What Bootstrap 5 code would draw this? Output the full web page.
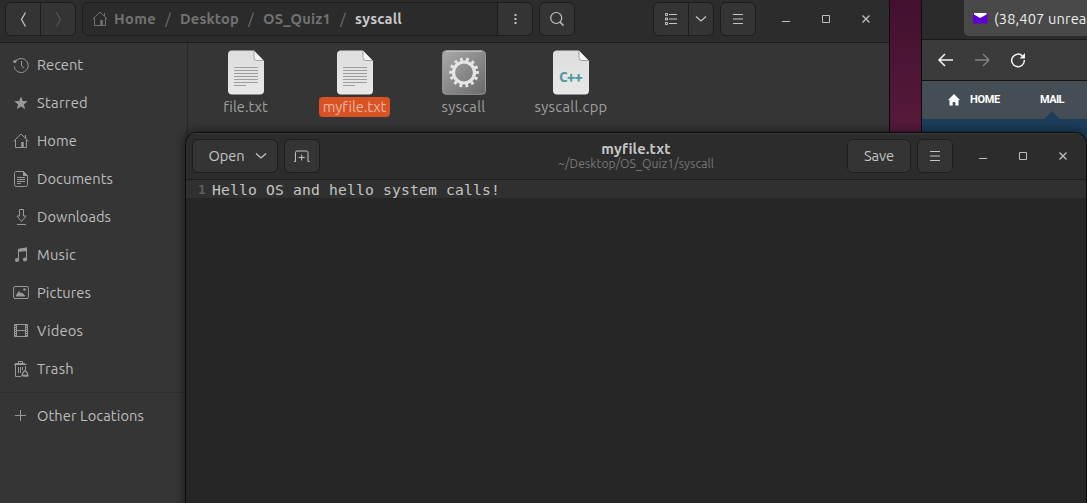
<!DOCTYPE html>
<html lang="en">
<head>
<meta charset="utf-8">
<title>Desktop</title>
<link href="https://cdn.jsdelivr.net/npm/bootstrap@5.3.0/dist/css/bootstrap.min.css" rel="stylesheet">
<style>
body{width:1087px;height:503px;background:linear-gradient(#43102e,#571a3b 130px);font:14.67px/20px Ubuntu,"Noto Sans",sans-serif;color:#bdbdbd}
svg{display:block;flex:none;fill:none;stroke:currentColor}
.win{position:absolute;overflow:hidden;border:1px solid #0c0c0c}
.files{left:-1px;top:-6px;width:891px;height:520px;border-radius:0 10px 0 0;background:#353535}
.browser{left:921px;top:-6px;width:190px;height:520px;border-radius:10px 0 0 0;background:#1c3e5c}
.editor{left:185px;top:132px;width:902px;height:390px;border-radius:12px 12px 0 0;background:#262626;box-shadow:0 0 9px 2px #0006}
.bar{background:#2c2c2c;border-bottom:1px solid #1c1c1c}
.files .bar{height:48px;padding:7px 0 0 5px}
.editor .bar{height:47px;padding:6px 0 0 6px;box-shadow:inset 0 1px #3a3a3a;position:relative}
.tool,.tools{height:34px;border:1px solid #1d1d1d;border-radius:6px;background:#343434;color:#c4c4c4}
.tool{width:36px;display:flex;align-items:center;justify-content:center;padding:0}
.tools{display:flex;overflow:hidden}
.tools>*{display:flex;align-items:center;justify-content:center}
.tools>*+*{border-left:1px solid #1d1d1d}
.path{width:346px;background:#2b2b2b;color:#727272;font-weight:700;justify-content:flex-start!important;padding-left:9px}
.sep{width:24px;text-align:center;font-weight:400}
.ctl{width:40px;height:34px;display:flex;align-items:center;justify-content:center}
.side{width:188px;height:472px;border-right:1px solid #282828;padding-top:3px}
.place{height:38px;padding-left:13px;display:flex;align-items:center;gap:8px}
.place svg{color:#989898}
.rule{height:1px;background:#2e2e2e;margin:4px 0}
.item{width:109px;display:flex;flex-direction:column;align-items:center;color:#a0a0a0}
.item svg{height:45px;margin-bottom:2px}
.label{height:20px;line-height:19px;border-radius:4px;padding:0 4px}
.sel{background:#d95223;color:#eab8a2}
.ttl{position:absolute;left:0;right:0;top:8px;text-align:center;line-height:15px;font-weight:700;color:#c6c6c6}
.ttl small{font-size:12.2px;font-weight:400;color:#777;display:block}
.code{height:18px;background:#303030;font:14.67px/20px "DejaVu Sans Mono",monospace;color:#c4c4c4;padding-left:11px;white-space:pre;display:flex}
.code b{color:#5d5d63;font-size:13px;width:15px;font-weight:700;padding-left:1px}
.tabs{height:45px;background:#2b2b2b;border-bottom:1px solid #1b1b1b;padding-left:42px}
.tabitem{height:41px;width:150px;background:#494949;border-radius:0 0 0 5px;padding:14px 0 0 9px;color:#ededed;white-space:nowrap}
.addr{height:41px;background:#3b3b3b;border-bottom:1px solid #141414;padding-left:13px;color:#f2f2f2}
.mailnav{height:38px;background:#464e55;padding-left:24px;color:#fff;font:bold 11px/37px Roboto,"Liberation Sans",sans-serif;position:relative}
.tri{position:absolute;left:122px;bottom:0;border:8px solid transparent;border-top:0;border-bottom-color:#1c3e5c}
[data-w]{white-space:pre;display:inline-block}
</style>
<script src="https://cdn.jsdelivr.net/npm/bootstrap@5.3.0/dist/js/bootstrap.bundle.min.js"></script>
</head>
<body class="position-relative overflow-hidden m-0">
<svg width="0" height="0" class="position-absolute">
<defs>
<linearGradient id="paper" x2="0" y2="1"><stop stop-color="#dedede"/><stop offset="1" stop-color="#e8e8e8"/></linearGradient>
<linearGradient id="metal" x2="1" y2="1"><stop stop-color="#aaa"/><stop offset="1" stop-color="#696969"/></linearGradient>
<symbol id="home" viewBox="0 0 16 16"><path d="M.6 8.2 8 1l7.4 7.2M2.5 7v7.5h11V7M12.5 2v3.2"/><path d="M8.2 14.5V9h2.6v5.5z" fill="currentColor" stroke="none"/></symbol>
<symbol id="menu" viewBox="0 0 12 12"><path d="M1 1.500h10M1 6h10M1 10.500h10" stroke-width="1"/></symbol>
<symbol id="down" viewBox="0 0 12 8"><path d="m1 1.500 5 4.500 5-4.500" stroke-width="1.300"/></symbol>
<symbol id="page" viewBox="0 0 36 45"><path d="M4 .5h22L36 11v29.500a4 4 0 0 1-4 4H4a4 4 0 0 1-4-4v-36a4 4 0 0 1 4-4z" fill="url(#paper)" stroke="none"/><path d="M26 1v6.500a3 3 0 0 0 3 3h6.500" fill="#f4f4f4" stroke="#999" stroke-width=".9"/></symbol>
<symbol id="lines" viewBox="0 0 36 45"><path d="M6 17.500h24M6 20.500h24M6 23.500h24M6 26.500h24M6 29.500h24M6 32.500h24M6 35.500h12" stroke="#9d9d9d"/></symbol>
<symbol id="min" viewBox="0 0 8 8"><path d="M0 6.500h8" stroke-width="1"/></symbol>
<symbol id="max" viewBox="0 0 8 8"><path d="M.5.500h7v7h-7z"/></symbol>
<symbol id="cls" viewBox="0 0 8 8"><path d="m.5.500 7 7m0-7-7 7" stroke-width="1.400"/></symbol>
</defs></svg>

<main class="win files">
 <header class="bar d-flex">
  <div class="tools" style="width:71px"><span style="width:34px"><svg width="7" height="17"><path d="M5.500 1.500 1.500 8.500l4 7" stroke-width="1.300"/></svg></span><span class="flex-fill" style="color:#606060"><svg width="7" height="17"><path d="m1.500 1.500 4 7-4 7"/></svg></span></div>
  <div class="tools" style="width:451px;margin-left:6px"><div class="path" style="width:414px"><svg width="16" height="16"><use href="#home"/></svg><span data-w="42" style="margin-left:6px">Home</span><span class="sep">/</span><span data-w="59">Desktop</span><span class="sep">/</span><span data-w="68">OS_Quiz1</span><span class="sep">/</span><span data-w="47" style="color:#c8c8c8">syscall</span></div><span class="flex-fill"><svg width="3" height="12"><path d="M1.500 1v2m0 2v2m0 2v2" stroke-width="2"/></svg></span></div>
  <button class="tool" style="margin-left:6px"><svg width="16" height="16"><circle cx="7.200" cy="7" r="5.500" stroke-width="1.200"/><path d="m11 11 3.500 3.500" stroke-width="1.500"/></svg></button>
  <div class="tools" style="width:61px;margin-left:78px"><span style="width:34px"><svg width="12" height="12"><path d="M.5.500h2v2h-2zm0 4.500h2v2h-2zm0 4.500h2v2h-2zM4 1.500h8M4 6h8M4 10.500h8"/></svg></span><span class="flex-fill"><svg width="12" height="8"><use href="#down"/></svg></span></div>
  <button class="tool" style="margin-left:6px"><svg width="12" height="12"><use href="#menu"/></svg></button>
  <div class="d-flex" style="margin-left:10px"><span class="ctl"><svg width="8" height="8"><use href="#min"/></svg></span><span class="ctl"><svg width="8" height="8"><use href="#max"/></svg></span><span class="ctl"><svg width="8" height="8"><use href="#cls"/></svg></span></div>
 </header>
 <div class="d-flex">
  <nav class="side">
   <div class="place"><svg width="16" height="16"><path d="M1.600 6A7 7 0 1 1 1.200 9.500M4 2.500l-2 2M8.500 4v5l2.500 2"/><circle cx="1.800" cy="4.500" r="1.600" fill="currentColor" stroke="none"/></svg><span data-w="46">Recent</span></div>
   <div class="place"><svg width="16" height="16"><path d="m8 1.500 1.800 4.600 4.900.2-3.800 3.100 1.300 4.900L8 11.500l-4.200 2.800 1.300-4.900-3.800-3.100 4.900-.2z" fill="currentColor" stroke="none"/></svg><span data-w="51">Starred</span></div>
   <div class="place"><svg width="16" height="16"><use href="#home"/></svg><span data-w="40">Home</span></div>
   <div class="place"><svg width="16" height="16"><path d="M2.500.500h8l4 4v9a2 2 0 0 1-2 2h-9a2 2 0 0 1-2-2v-11a2 2 0 0 1 1-2zM4 6.500h8M4 8.500h8M4 10.500h8M4 12.500h4"/><path d="M10 0v5h5z" fill="currentColor" stroke="none"/></svg><span data-w="76">Documents</span></div>
   <div class="place"><svg width="16" height="16"><path d="M6.500.500h4V7H13l-4.500 5.500L4 7h2.500zM4 15.500h9"/></svg><span data-w="74">Downloads</span></div>
   <div class="place"><svg width="16" height="16"><path d="M5.500 13V2.500L13.500 1v11.500" /><path d="M5 2l9-1.500V4L5 5z" fill="currentColor" stroke="none"/><circle cx="4" cy="13" r="2.100" fill="currentColor" stroke="none"/><circle cx="12" cy="12.500" r="2.100" fill="currentColor" stroke="none"/></svg><span data-w="39">Music</span></div>
   <div class="place"><svg width="16" height="16"><rect x=".6" y="1.500" width="14.800" height="12" rx="1.500"/><path d="M1 13.500h14M3 11l3-4.500 2 2.500 1-1 3 3z" fill="currentColor" stroke-width="1"/><circle cx="11.500" cy="4.500" r="1.300" fill="currentColor" stroke="none"/></svg><span data-w="54">Pictures</span></div>
   <div class="place"><svg width="16" height="16"><path d="M1.500 1.500h13v12h-13zM3.500 1.500v12M12.500 1.500v12M3.500 7.500h9"/><path d="M2.500 2v12M13.500 2v12" stroke-dasharray="1 1"/></svg><span data-w="46">Videos</span></div>
   <div class="place"><svg width="16" height="16"><path d="M5.500 2V.5h4V2M1 3.500h12.500M2.500 4v11.500H8M5.500 6v6M7.500 6v6M9.500 6v3M12.500 5v4"/><path d="M2.500 2h9l2 2H1z" fill="currentColor" stroke="none"/><path d="m10 11.500 2-2 2 2 1 3H9zM10 15h5" stroke-width="1.300"/></svg><span data-w="37">Trash</span></div>
   <div class="rule"></div>
   <div class="place"><svg width="16" height="16"><path d="M2 7.500h11M7.500 2v11"/></svg><span data-w="107">Other Locations</span></div>
  </nav>
  <section class="d-flex" style="padding:7px 0 0 3px">
   <div class="item"><svg width="36" height="45"><use href="#page"/><use href="#lines"/></svg><span class="label"><span data-w="44">file.txt</span></span></div>
   <div class="item"><svg width="36" height="45"><use href="#page"/><use href="#lines"/></svg><span class="label sel"><span data-w="63">myfile.txt</span></span></div>
   <div class="item"><svg width="44" height="45"><rect x=".5" y=".8" width="43" height="43.500" rx="3.500" fill="url(#metal)" stroke="#969696"/><path d="M4 1.200h36" stroke="#ccc"/><circle cx="22" cy="22.500" r="10.500" stroke="#e6e6e4" stroke-width="3.200"/><circle cx="22" cy="22.500" r="13.200" stroke="#e6e6e4" stroke-width="3.400" stroke-dasharray="2.800 3.124" transform="rotate(-6 22 22.500)"/></svg><span class="label"><span data-w="44">syscall</span></span></div>
   <div class="item" style="width:106px"><svg width="36" height="45"><use href="#page"/><text x="6.500" y="32" fill="#50999e" stroke="#50999e" stroke-width=".2" font-family="Ubuntu Mono,DejaVu Sans Mono,monospace" font-weight="700" font-size="14.500" textLength="23">C++</text></svg><span class="label"><span data-w="73">syscall.cpp</span></span></div>
  </section>
 </div>
</main>

<aside class="win browser">
 <div class="tabs"><div class="tabitem d-flex"><svg width="15" height="11" style="margin-top:4px;margin-right:6px"><path d="M0 0h14.500v10.500H0z" fill="#5f01d1" stroke="none"/><path d="M1 0h12.500v1.500L7.200 5 1 1.500z" fill="#fff" stroke="none"/></svg><span data-w="106">(38,407 unread)</span></div></div>
 <div class="addr d-flex align-items-center"><svg width="20" height="16"><path d="M18 8H4.500M10 2 4 8l6 6" stroke-width="1.500"/></svg><svg width="18" height="16" style="margin-left:19px;color:#858585"><path d="M1 8h13M9 2l6 6-6 6" stroke-width="1.300"/></svg><svg width="17" height="16" style="margin-left:18px"><path d="M12.500 4A6.300 6.300 0 1 0 14.300 8" stroke-width="1.500"/><path d="M15 1v5.500H9.500z" fill="currentColor" stroke="none"/></svg></div>
 <div class="mailnav d-flex"><svg width="16" height="14" style="margin-top:12px"><path d="M2 7 8 1l6 6h-1.500v5.500H9.300V9H6.700v3.500H3.500V7z" fill="#fff" stroke="none"/></svg><span data-w="30" style="margin-left:8px">HOME</span><span data-w="24" style="margin-left:40px">MAIL</span><i class="tri"></i></div>
</aside>

<section class="win editor">
 <header class="bar d-flex">
  <button class="tool" style="width:86px;gap:10px;padding-left:5px"><span data-w="36">Open</span><svg width="12" height="8"><use href="#down"/></svg></button>
  <button class="tool" style="margin-left:6px"><svg width="16" height="13"><path d="M0 11.500h1.500v-9A1.500 1.500 0 0 1 3 1h9.500A1.500 1.500 0 0 1 14 2.500v9h1.500M7.700 4.500v6M4.700 7.500h6"/></svg></button>
  <button class="tool ms-auto" style="width:64px"><span data-w="30">Save</span></button>
  <button class="tool" style="margin-left:6px"><svg width="12" height="12"><use href="#menu"/></svg></button>
  <div class="d-flex" style="margin:0 3px 0 10px"><span class="ctl"><svg width="8" height="8"><use href="#min"/></svg></span><span class="ctl"><svg width="8" height="8"><use href="#max"/></svg></span><span class="ctl"><svg width="8" height="8"><use href="#cls"/></svg></span></div>
  <div class="ttl"><span data-w="69">myfile.txt</span><small><span data-w="156">~/Desktop/OS_Quiz1/syscall</span></small></div>
 </header>
 <div class="code"><b>1</b><span data-w="288">Hello OS and hello system calls!</span></div>
</section>
<script>
// Track each label to its design width.
document.querySelectorAll('[data-w]').forEach(e=>{
  const w=+e.dataset.w, n=e.textContent.length;
  e.style.letterSpacing=((w-e.getBoundingClientRect().width)/n)+'px';
});
</script>
</body>
</html>
